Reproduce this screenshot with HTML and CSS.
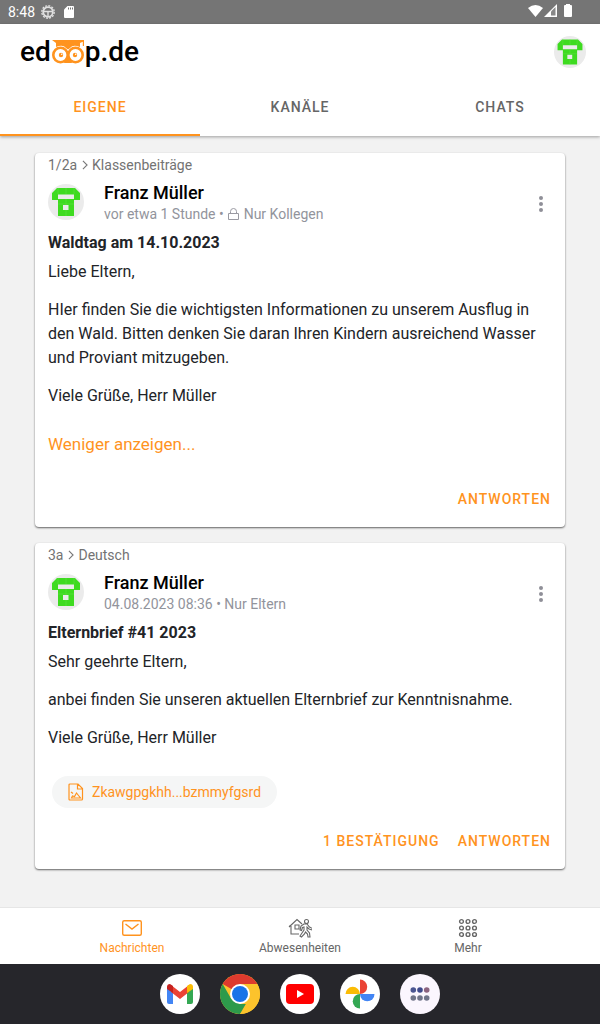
FILE: index.html
```html
<!DOCTYPE html>
<html lang="de">
<head>
    <meta charset="UTF-8">
    <meta name="viewport" content="width=device-width, initial-scale=1.0">
    <title>edoop.de</title>
    <link rel="stylesheet" href="styles.css">
</head>
<body>
    <svg width="0" height="0" class="sprite" aria-hidden="true">
        <symbol id="avatar" viewBox="0 0 36 36">
            <circle cx="18" cy="18" r="18" fill="#ebebeb"/>
            <path fill="#3edb20" fill-rule="evenodd" d="M9 4h18l5 5v7h-6v16H10V16H4V9zM10 10.500v4.500h16v-4.500zM15 21v5h5.500v-5z"/>
            <path stroke="#64df4b" stroke-width=".5" fill="none" d="M10 4v6M18 4v6M26 4v6M10 20h16M18 15v6M18 26v6"/>
        </symbol>
        <symbol id="chevron" viewBox="0 0 7 12">
            <path d="M1 1l5 5-5 5" fill="none" stroke="#777" stroke-width="1.3"/>
        </symbol>
        <symbol id="dots" viewBox="0 0 4 16">
            <g fill="#8f8f98"><circle cx="2" cy="2" r="2"/><circle cx="2" cy="8" r="2"/><circle cx="2" cy="14" r="2"/></g>
        </symbol>
    </svg>

    <div class="status">
        <span>8:48</span>
        <svg width="14" height="14" viewBox="0 0 14 14">
            <g fill="none" stroke="#e0e0e0">
                <circle cx="7" cy="7" r="6.2" stroke-width="1.4" stroke-dasharray="2 1.2"/>
                <circle cx="7" cy="7" r="4.8" stroke-width="1.8"/>
                <path d="M2.5 6.5h9M7 7v4.5" stroke-width="1.4"/>
            </g>
        </svg>
        <svg width="10" height="12" viewBox="0 0 10 12">
            <path fill="#fff" d="M3.500 0H9a1 1 0 0 1 1 1v10a1 1 0 0 1-1 1H1a1 1 0 0 1-1-1V3.500z"/>
            <path stroke="#777" d="M4.500 1.500v2M6.500 1.500v2M8.500 1.500v2"/>
        </svg>
        <svg class="signals" width="44" height="14" viewBox="0 0 44 14">
            <path fill="#fff" d="M0 4Q7.500-2 15 4L7.500 13z"/>
            <path fill="#fff" d="M16 13L29 0v13z"/>
            <path fill="#888" d="M23 7.500l4.500-4.500v8.500H23z"/>
            <path fill="#fff" d="M38 0h4v1h1q1 0 1 1v10q0 1-1 1h-6q-1 0-1-1V2q0-1 1-1h1z"/>
        </svg>
    </div>

    <header class="header">
        <div class="topbar">
            <a href="#" class="logo" aria-label="edoop.de">
                <span>ed</span>
                <svg width="34" height="26" viewBox="0 0 34 26">
                    <path fill="#ff931e" d="M1 1h32v6h-1.200V2.800L29 4v4q-7-3-10 1l-2 1.500L15 9Q12 5 5 8V4z"/>
                    <path fill="#ff931e" d="M14 20l3-5 3 5 1 4h-8z"/>
                    <g fill="#fff" stroke="#ff931e" stroke-width="2.600">
                        <circle cx="9.500" cy="16" r="7.200"/>
                        <circle cx="24.500" cy="16" r="7.200"/>
                    </g>
                    <circle cx="10" cy="16" r="2.200" fill="#ff931e"/>
                    <circle cx="24" cy="16" r="2.200" fill="#ff931e"/>
                    <circle cx="10.700" cy="15.300" r=".8" fill="#fff"/>
                    <circle cx="24.700" cy="15.300" r=".8" fill="#fff"/>
                </svg>
                <span>p.de</span>
            </a>
            <svg width="32" height="32"><use href="#avatar"/></svg>
        </div>
        <nav class="tabs">
            <button class="tab active">EIGENE</button>
            <button class="tab">KANÄLE</button>
            <button class="tab">CHATS</button>
        </nav>
    </header>

    <main class="feed">
        <article class="card">
            <div class="path">1/2a <svg width="6" height="10"><use href="#chevron"/></svg> Klassenbeiträge</div>
            <div class="head">
                <svg width="36" height="36"><use href="#avatar"/></svg>
                <div class="author">
                    <div class="name">Franz Müller</div>
                    <div class="meta">vor etwa 1 Stunde •
                        <svg width="11" height="12" viewBox="0 0 11 12"><path fill="none" stroke="#9a9aa2" d="M.5 5.500h10v6H.5zM2.500 5.500V3.500a3 3 0 0 1 6 0v2"/></svg>
                        Nur Kollegen</div>
                </div>
                <button class="more" aria-label="Mehr"><svg width="4" height="16"><use href="#dots"/></svg></button>
            </div>
            <h2>Waldtag am 14.10.2023</h2>
            <div class="text">
                <p>Liebe Eltern,</p>
                <p>HIer finden Sie die wichtigsten Informationen zu unserem Ausflug in den Wald. Bitten denken Sie daran Ihren Kindern ausreichend Wasser und Proviant mitzugeben.</p>
                <p>Viele Grüße, Herr Müller</p>
            </div>
            <a href="#" class="less">Weniger anzeigen...</a>
            <div class="actions">
                <button>ANTWORTEN</button>
            </div>
        </article>

        <article class="card">
            <div class="path">3a <svg width="6" height="10"><use href="#chevron"/></svg> Deutsch</div>
            <div class="head">
                <svg width="36" height="36"><use href="#avatar"/></svg>
                <div class="author">
                    <div class="name">Franz Müller</div>
                    <div class="meta">04.08.2023 08:36 • Nur Eltern</div>
                </div>
                <button class="more" aria-label="Mehr"><svg width="4" height="16"><use href="#dots"/></svg></button>
            </div>
            <h2>Elternbrief #41 2023</h2>
            <div class="text">
                <p>Sehr geehrte Eltern,</p>
                <p>anbei finden Sie unseren aktuellen Elternbrief zur Kenntnisnahme.</p>
                <p>Viele Grüße, Herr Müller</p>
            </div>
            <a href="#" class="file">
                <svg width="16" height="18" viewBox="0 0 16 18">
                    <g fill="none" stroke="#ff931e" stroke-width="1.2">
                        <path d="M1 2q0-1 1-1h8l4.500 4.500V16q0 1-1 1H2q-1 0-1-1zM9.500 1v5h5"/>
                        <path d="M3.500 15l1-2 2 .5L8.500 10l2 2.500 2 2.500zM3 9l2 1.500"/>
                    </g>
                </svg>
                Zkawgpgkhh...bzmmyfgsrd
            </a>
            <div class="actions">
                <button>1 BESTÄTIGUNG</button>
                <button>ANTWORTEN</button>
            </div>
        </article>
    </main>

    <nav class="bottom">
        <a href="#" class="active">
            <svg width="24" height="20" viewBox="0 0 24 20"><g fill="none" stroke="#ff931e" stroke-width="1.400"><rect x="2.700" y="2.700" width="18.600" height="14.600" rx="1.500"/><path d="M5.500 6l6.500 5 6.500-5"/></g></svg>
            Nachrichten
        </a>
        <a href="#">
            <svg width="24" height="20" viewBox="0 0 24 20">
                <g fill="none" stroke="#666" stroke-width="1.100">
                    <path d="M1 9l8-7.500 5 4.500M3 8v8h8M3 8H1M7 7h4v4H7z"/>
                    <circle cx="18.500" cy="3.500" r="2"/>
                    <path d="M16 6l-3 2-1 4 1.500.5 1-3L16 9v3l-2 3-2 3 1.500 1 3-3 1-2 2 2 .5 3h2l-.5-4-2.500-3V9l2 2 3 1 .5-1.500-3-1.500L19 6z"/>
                </g>
            </svg>
            Abwesenheiten
        </a>
        <a href="#">
            <svg width="20" height="20" viewBox="0 0 20 20">
                <g fill="none" stroke="#666" stroke-width="1.400">
                    <circle cx="3.500" cy="3.500" r="1.900"/><circle cx="10" cy="3.500" r="1.900"/><circle cx="16.500" cy="3.500" r="1.900"/>
                    <circle cx="3.500" cy="10" r="1.900"/><circle cx="10" cy="10" r="1.900"/><circle cx="16.500" cy="10" r="1.900"/>
                    <circle cx="3.500" cy="16.500" r="1.900"/><circle cx="10" cy="16.500" r="1.900"/><circle cx="16.500" cy="16.500" r="1.900"/>
                </g>
            </svg>
            Mehr
        </a>
    </nav>

    <div class="dock">
        <button aria-label="Gmail"><svg width="40" height="40" viewBox="0 0 40 40">
            <circle cx="20" cy="20" r="20" fill="#fff"/>
            <path fill="#4285f4" d="M7 13l6 4v13H9q-2 0-2-2z"/>
            <path fill="#34a853" d="M33 13l-6 4v13h4q2 0 2-2z"/>
            <path fill="#ea4335" d="M11 11l9 7 9-7v7l-9 7-9-7z"/>
            <path fill="#c5221f" d="M7 13q0-3 3-3l3 2v7l-6-4z"/>
            <path fill="#fbbc04" d="M33 13q0-3-3-3l-3 2v7l6-4z"/>
        </svg></button>
        <button aria-label="Chrome"><svg width="40" height="40" viewBox="0 0 40 40">
            <circle cx="20" cy="20" r="20" fill="#fcc32c"/>
            <path fill="#dd3a2e" d="M20 20L2.700 10A20 20 0 0 1 37.300 10H20z"/>
            <path fill="#2d9a4b" d="M2.700 10l8.600 15L20 30h8.700L20 40A20 20 0 0 1 2.700 10z"/>
            <path fill="#fcc32c" d="M28.700 25L20 40A20 20 0 0 0 37.300 10H20z"/>
            <circle cx="20" cy="20" r="10" fill="#fff"/>
            <circle cx="20" cy="20" r="8" fill="#1a73e8"/>
        </svg></button>
        <button aria-label="YouTube"><svg width="40" height="40" viewBox="0 0 40 40">
            <circle cx="20" cy="20" r="20" fill="#fff"/>
            <rect x="6" y="10" width="28" height="20" rx="4" fill="#f00"/>
            <path fill="#fff" d="M17 16l7 4-7 4z"/>
        </svg></button>
        <button aria-label="Fotos"><svg width="40" height="40" viewBox="0 0 40 40">
            <circle cx="20" cy="20" r="20" fill="#fff"/>
            <path fill="#ea4335" d="M20 5.500a7.200 7.200 0 0 1 0 14.500z"/>
            <path fill="#4285f4" d="M34.500 20A7.200 7.200 0 0 1 20 20z"/>
            <path fill="#34a853" d="M20 34.500A7.200 7.200 0 0 1 20 20z"/>
            <path fill="#fbbc04" d="M5.500 20A7.200 7.200 0 0 1 20 20z"/>
        </svg></button>
        <button aria-label="Alle Apps"><svg width="40" height="40" viewBox="0 0 40 40">
            <circle cx="20" cy="20" r="20" fill="#fbf6fe"/>
            <circle cx="13.300" cy="16" r="2.800" fill="#4b5591"/><circle cx="20" cy="16" r="2.800" fill="#3f4a8c"/><circle cx="26.700" cy="16" r="2.800" fill="#8c637f"/>
            <g fill="#71758a"><circle cx="13.300" cy="24" r="2.800"/><circle cx="20" cy="24" r="2.800"/><circle cx="26.700" cy="24" r="2.800"/></g>
        </svg></button>
    </div>
</body>
</html>
```
FILE: styles.css
```css
* {
    box-sizing: border-box;
}
body {
    margin: 0;
    min-height: 100vh;
    display: flex;
    flex-direction: column;
    font-family: Roboto, sans-serif;
    font-size: 16px;
    line-height: 24px;
    color: #222428;
    background: #f2f2f2;
}
button {
    padding: 0;
    border: none;
    background: none;
    font-family: inherit;
    cursor: pointer;
}
a {
    text-decoration: none;
}
svg {
    flex: none;
}
.sprite {
    display: none;
}

/* status bar */
.status {
    display: flex;
    align-items: center;
    gap: 6px;
    height: 24px;
    padding: 0 28px 0 8px;
    font-size: 14px;
    color: #fff;
    background: #757575;
}
.status svg + svg {
    margin-left: 3px;
}
.status .signals {
    margin-left: auto;
    margin-bottom: 2px;
}

/* header */
.header {
    background: #fff;
    box-shadow: 0 1px 3px rgba(0, 0, 0, 0.35);
}
.topbar {
    display: flex;
    align-items: center;
    justify-content: space-between;
    height: 56px;
    padding: 0 14px 0 20px;
}
.logo {
    display: flex;
    align-items: center;
    font-size: 28px;
    font-weight: 500;
    color: #000;
}
.tabs {
    display: flex;
}
.tab {
    flex: 1;
    height: 56px;
    border-bottom: 2px solid transparent;
    font-size: 14px;
    font-weight: 500;
    letter-spacing: 1px;
    color: #666;
}
.tab.active {
    color: #ff931e;
    border-color: #ff931e;
}

/* posts */
.feed {
    flex: 1;
    display: flex;
    flex-direction: column;
    gap: 16px;
    padding: 17px 35px;
}
.card {
    padding: 0 13px 10px;
    border-radius: 4px;
    background: #fff;
    box-shadow: 0 1px 2px rgba(0, 0, 0, 0.6);
}
.path {
    font-size: 14px;
    color: #737373;
}
.path svg {
    margin: 0 1px;
}
.head {
    display: flex;
    align-items: center;
    gap: 20px;
    padding: 4px 0 8px;
}
.author {
    flex: 1;
}
.name {
    font-size: 18px;
    font-weight: 500;
    color: #000;
}
.meta {
    font-size: 14px;
    line-height: 18px;
    color: #92949c;
}
.meta svg {
    margin: 0 1px;
    vertical-align: -1px;
}
.more {
    width: 22px;
    height: 24px;
    margin-top: 4px;
    line-height: 0;
}
h2 {
    margin: 0 0 5px;
    font-size: 16px;
    font-weight: 700;
}
.text p {
    margin: 0 0 14px;
}
.text p:last-child {
    margin: 0;
}
.less {
    display: block;
    margin: 24px 0 25px;
    font-size: 17px;
    color: #ff931e;
}
.file {
    display: inline-flex;
    align-items: center;
    gap: 8px;
    height: 32px;
    margin: 26px 4px 15px;
    padding: 0 16px;
    border-radius: 16px;
    font-size: 14px;
    color: #ff931e;
    background: #f5f6f6;
    vertical-align: top;
}
.actions {
    display: flex;
    justify-content: flex-end;
    gap: 18px;
    padding-right: 1px;
}
.actions button {
    height: 36px;
    font-size: 14px;
    font-weight: 500;
    letter-spacing: 1px;
    color: #ff931e;
}

/* bottom navigation */
.bottom {
    display: flex;
    justify-content: center;
    height: 57px;
    border-top: 1px solid #e6e6e6;
    background: #fff;
}
.bottom a {
    flex: 0 1 168px;
    display: flex;
    flex-direction: column;
    align-items: center;
    padding-top: 10px;
    font-size: 12px;
    line-height: 20px;
    color: #666;
}
.bottom a.active {
    color: #ff931e;
}

/* system dock */
.dock {
    display: flex;
    justify-content: center;
    align-items: center;
    gap: 20px;
    height: 60px;
    background: #26262b;
}
.dock button {
    width: 40px;
    height: 40px;
}
```
